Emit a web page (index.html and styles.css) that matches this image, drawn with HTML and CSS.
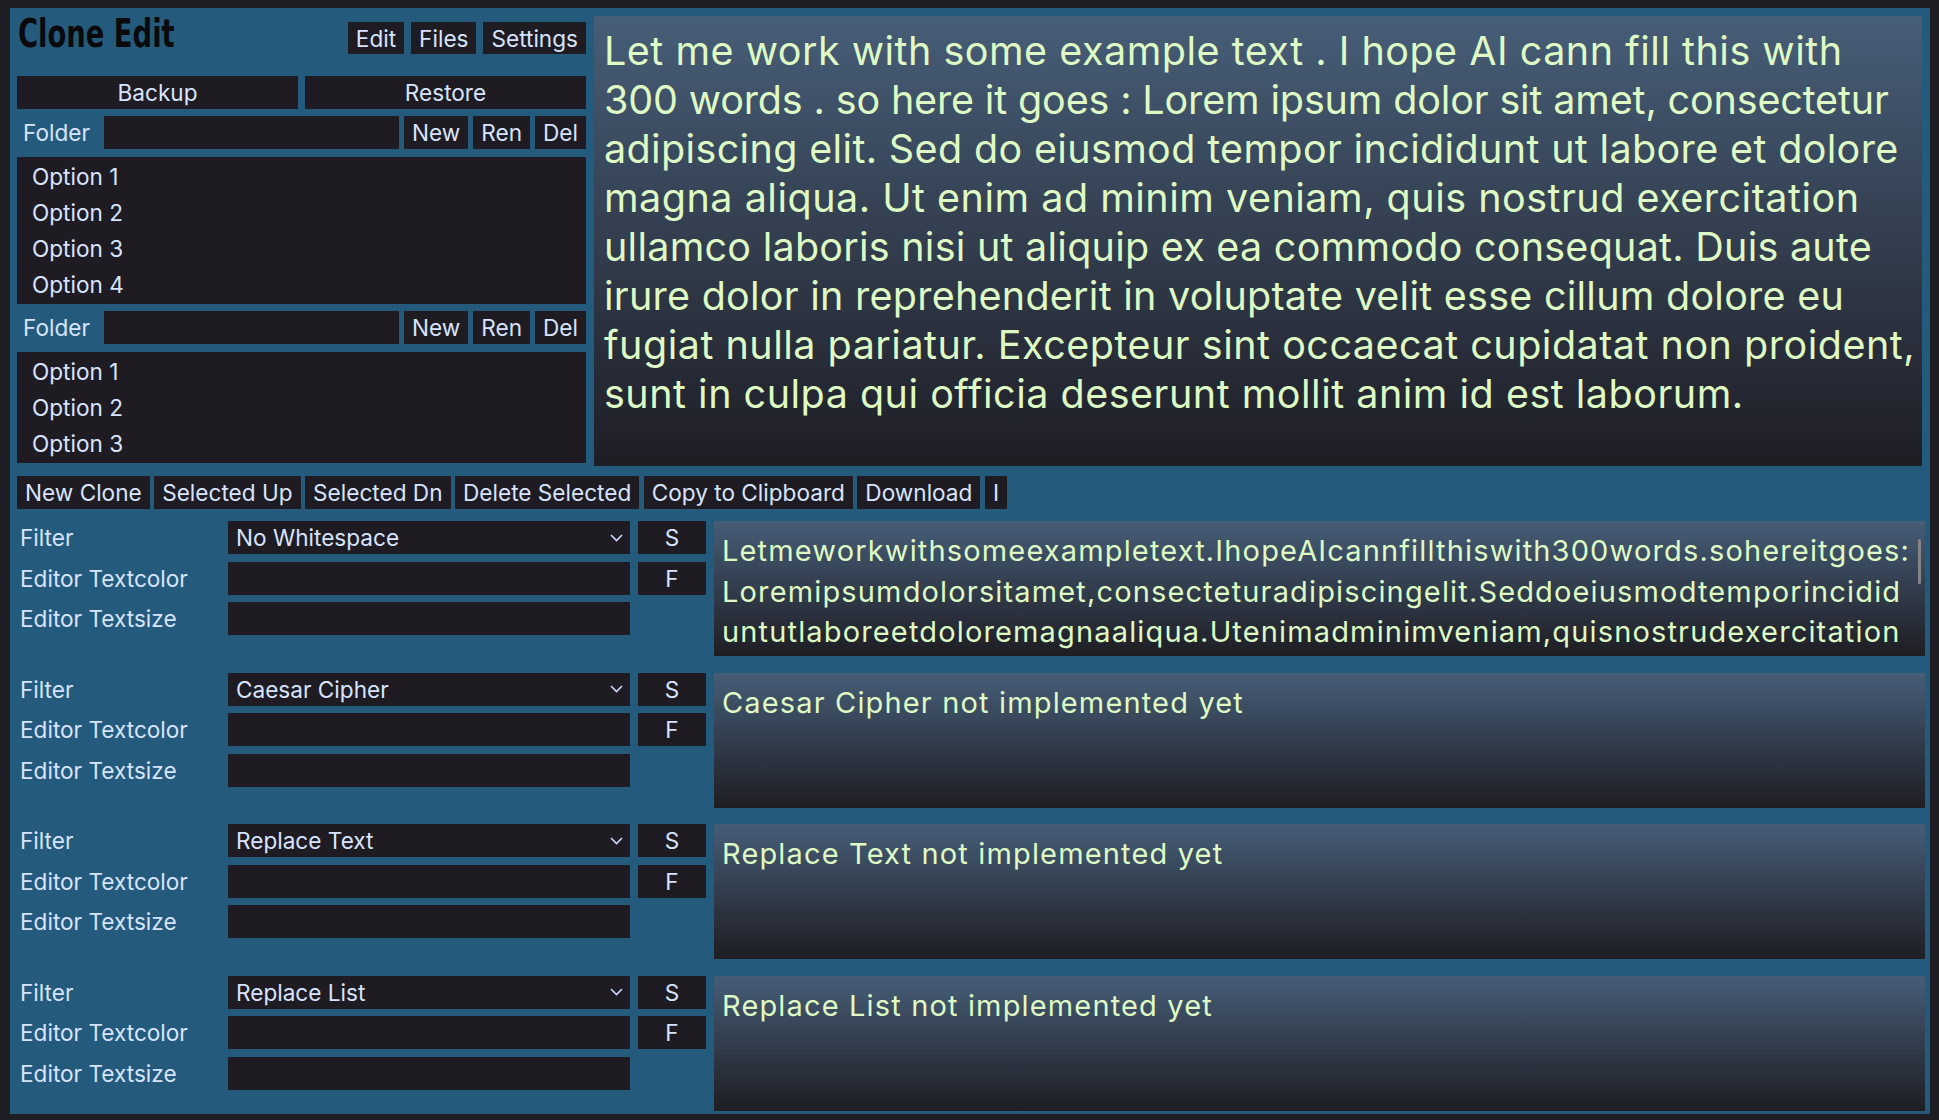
FILE: index.html
```html
<!DOCTYPE html>
<html lang="en">
<head>
<meta charset="utf-8">
<title>Clone Edit</title>
<link rel="stylesheet" href="styles.css">
</head>
<body>
<div class="app">
  <div class="top">
    <div class="side">
      <div class="header">
        <h1 class="title">Clone Edit</h1>
        <div class="nav">
          <button class="btn nav-btn">Edit</button>
          <button class="btn nav-btn">Files</button>
          <button class="btn nav-btn">Settings</button>
        </div>
      </div>
      <div class="pair">
        <button class="btn wide">Backup</button>
        <button class="btn wide">Restore</button>
      </div>
      <div class="folder">
        <span class="folder-label">Folder</span>
        <div class="field"></div>
        <button class="btn">New</button>
        <button class="btn">Ren</button>
        <button class="btn">Del</button>
      </div>
      <div class="list">
        <div class="list-item">Option 1</div>
        <div class="list-item">Option 2</div>
        <div class="list-item">Option 3</div>
        <div class="list-item">Option 4</div>
      </div>
      <div class="folder">
        <span class="folder-label">Folder</span>
        <div class="field"></div>
        <button class="btn">New</button>
        <button class="btn">Ren</button>
        <button class="btn">Del</button>
      </div>
      <div class="list list-last">
        <div class="list-item">Option 1</div>
        <div class="list-item">Option 2</div>
        <div class="list-item">Option 3</div>
      </div>
    </div>
    <div class="editor">Let me work with some example text . I hope AI cann fill this with<br><span class="tight">300 words . so here it goes : Lorem ipsum dolor sit amet, consectetur</span><br><span class="mid">adipiscing elit. Sed do eiusmod tempor incididunt ut labore et dolore</span><br>magna aliqua. Ut enim ad minim veniam, quis nostrud exercitation<br><span class="snug">ullamco laboris nisi ut aliquip ex ea commodo consequat. Duis aute</span><br><span class="snug">irure dolor in reprehenderit in voluptate velit esse cillum dolore eu</span><br>fugiat nulla pariatur. Excepteur sint occaecat cupidatat non proident,<br>sunt in culpa qui officia deserunt mollit anim id est laborum.</div>
  </div>

  <div class="toolbar">
    <button class="btn">New Clone</button>
    <button class="btn">Selected Up</button>
    <button class="btn">Selected Dn</button>
    <button class="btn">Delete Selected</button>
    <button class="btn">Copy to Clipboard</button>
    <button class="btn">Download</button>
    <button class="btn">I</button>
  </div>

  <div class="filters">
    <div class="filter">
      <span class="label">Filter</span>
      <div class="select"><span>No Whitespace</span><svg class="chev" viewBox="0 0 13 8" width="13" height="8"><path d="M1 1 L6.5 6.5 L12 1" fill="none" stroke="currentColor" stroke-width="1.6"/></svg></div>
      <button class="btn sq">S</button>
      <div class="out">Letmeworkwithsomeexampletext.IhopeAIcannfillthiswith300words.sohereitgoes:<br>Loremipsumdolorsitamet,consecteturadipiscingelit.Seddoeiusmodtemporincidid<br>untutlaboreetdoloremagnaaliqua.Utenimadminimveniam,quisnostrudexercitation<span class="scroll-thumb"></span></div>
      <span class="label">Editor Textcolor</span>
      <div class="field"></div>
      <button class="btn sq">F</button>
      <span class="label">Editor Textsize</span>
      <div class="field"></div>
    </div>

    <div class="filter">
      <span class="label">Filter</span>
      <div class="select"><span>Caesar Cipher</span><svg class="chev" viewBox="0 0 13 8" width="13" height="8"><path d="M1 1 L6.5 6.5 L12 1" fill="none" stroke="currentColor" stroke-width="1.6"/></svg></div>
      <button class="btn sq">S</button>
      <div class="out">Caesar Cipher not implemented yet</div>
      <span class="label">Editor Textcolor</span>
      <div class="field"></div>
      <button class="btn sq">F</button>
      <span class="label">Editor Textsize</span>
      <div class="field"></div>
    </div>

    <div class="filter">
      <span class="label">Filter</span>
      <div class="select"><span>Replace Text</span><svg class="chev" viewBox="0 0 13 8" width="13" height="8"><path d="M1 1 L6.5 6.5 L12 1" fill="none" stroke="currentColor" stroke-width="1.6"/></svg></div>
      <button class="btn sq">S</button>
      <div class="out">Replace Text not implemented yet</div>
      <span class="label">Editor Textcolor</span>
      <div class="field"></div>
      <button class="btn sq">F</button>
      <span class="label">Editor Textsize</span>
      <div class="field"></div>
    </div>

    <div class="filter">
      <span class="label">Filter</span>
      <div class="select"><span>Replace List</span><svg class="chev" viewBox="0 0 13 8" width="13" height="8"><path d="M1 1 L6.5 6.5 L12 1" fill="none" stroke="currentColor" stroke-width="1.6"/></svg></div>
      <button class="btn sq">S</button>
      <div class="out">Replace List not implemented yet</div>
      <span class="label">Editor Textcolor</span>
      <div class="field"></div>
      <button class="btn sq">F</button>
      <span class="label">Editor Textsize</span>
      <div class="field"></div>
    </div>
  </div>
</div>
</body>
</html>
```

FILE: styles.css
```css
* { box-sizing: border-box; }

html, body {
  margin: 0;
  padding: 0;
}

body {
  width: 1939px;
  height: 1120px;
  overflow: hidden;
  background: #1e1d23;
  font-family: Inter, "Noto Sans", sans-serif;
  font-size: 22.6px;
  color: #d8e4ff;
}

.app {
  margin: 8px 9px 0 10px;
  height: 1106px;
  background: #245a7b;
  padding: 8px 5px 0 7px;
  overflow: hidden;
}

.top {
  display: flex;
  gap: 8px;
  height: 450px;
}

.side {
  width: 569px;
  flex: none;
  display: flex;
  flex-direction: column;
}

.header {
  height: 52px;
  margin-bottom: 8px;
  display: flex;
  justify-content: space-between;
  align-items: flex-start;
}

.title {
  margin: -2px 0 0 1px;
  font-family: "DejaVu Sans", sans-serif;
  font-stretch: condensed;
  font-weight: bold;
  font-size: 39px;
  line-height: 1;
  color: #0a0a0c;
  transform: scaleX(0.78);
  transform-origin: left top;
  white-space: nowrap;
}

.nav {
  display: flex;
  gap: 7px;
  margin-top: 6px;
}

.btn {
  background: #1e1c22;
  color: #d8e4ff;
  border: 0;
  border-radius: 0;
  margin: 0;
  font-family: inherit;
  font-size: 22.6px;
  height: 33px;
  padding: 0 8px;
  display: flex;
  align-items: center;
  justify-content: center;
  white-space: nowrap;
}

.nav-btn {
  height: 32px;
}

.pair {
  display: flex;
  gap: 7px;
  margin-bottom: 7px;
}

.wide {
  flex: 1;
}

.folder {
  display: flex;
  gap: 5px;
  height: 33px;
  margin-bottom: 8px;
}

.folder-label {
  width: 82px;
  flex: none;
  padding-left: 6px;
  display: flex;
  align-items: center;
}

.field {
  flex: 1;
  background: #1e1c22;
  height: 33px;
}

.list {
  background: #1e1c22;
  padding: 2px 0 1px;
  margin-bottom: 7px;
}

.list-last {
  margin-bottom: 0;
}

.list-item {
  height: 36px;
  line-height: 36px;
  padding-left: 15px;
}

.editor {
  flex: 1;
  margin-right: 3px;
  height: 450px;
  background: linear-gradient(180deg, #475e78 0%, #1e1d24 100%);
  padding: 10.5px 10px 8px;
  font-family: Inter, sans-serif;
  font-size: 39.5px;
  letter-spacing: 0.5px;
  line-height: 49px;
  color: #def9c4;
  white-space: nowrap;
  overflow: hidden;
}

.tight {
  letter-spacing: -0.15px;
}

.mid {
  letter-spacing: 0.35px;
}

.snug {
  letter-spacing: 0.25px;
}

.toolbar {
  display: flex;
  gap: 4.5px;
  margin-top: 10px;
}

.filters {
  margin-top: 12px;
  display: flex;
  flex-direction: column;
  gap: 16.67px;
}

.filter {
  display: grid;
  grid-template-columns: 203px 402px 68px 1fr;
  grid-template-rows: 33px 33px 33px auto;
  column-gap: 8px;
  row-gap: 7.5px;
  height: 135px;
}

.label {
  grid-column: 1;
  padding-left: 3px;
  display: flex;
  align-items: center;
  white-space: nowrap;
}

.filter .field {
  grid-column: 2;
}

.select {
  background: #1e1c22;
  display: flex;
  align-items: center;
  justify-content: space-between;
  padding: 0 7px 0 8px;
}

.chev {
  color: #c9d8ff;
}

.sq {
  grid-column: 3;
}

.out {
  grid-column: 4;
  grid-row: 1 / 5;
  position: relative;
  height: 135px;
  background: linear-gradient(180deg, #465d77 0%, #1e1d23 100%);
  padding: 10px 8px;
  font-size: 29px;
  letter-spacing: 1.15px;
  line-height: 40.5px;
  color: #def9c4;
  white-space: nowrap;
  overflow: hidden;
}

.scroll-thumb {
  position: absolute;
  right: 4px;
  top: 18px;
  width: 3px;
  height: 45px;
  border-radius: 2px;
  background: #858585;
}
```
